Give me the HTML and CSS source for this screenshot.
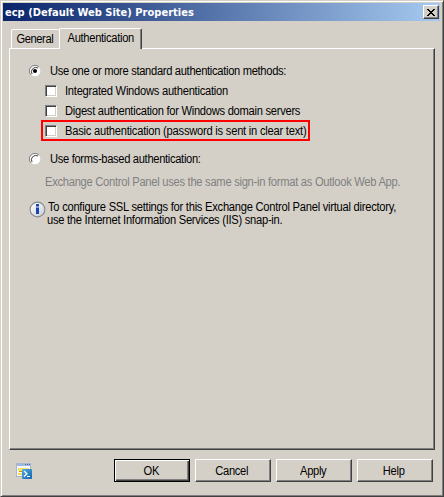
FILE: index.html
```html
<!DOCTYPE html>
<html lang="en">
<head>
<meta charset="utf-8">
<title>ecp (Default Web Site) Properties</title>
<link rel="stylesheet" href="styles.css">
</head>
<body>
<main class="window">
  <header class="titlebar">
    <h1 class="title">ecp (Default Web Site) Properties</h1>
    <button class="close" aria-label="Close">
      <svg width="8" height="7" viewBox="0 0 8 7" shape-rendering="crispEdges"><path d="M0 0h2v1h1v1h2V1h1V0h2v1H7v1H6v1H5v1h1v1h1v1h1v1H6V6H5V5H3v1H2v1H0V6h1V5h1V4h1V3H2V2H1V1H0z"/></svg>
    </button>
  </header>
  <nav class="tabs">
    <div class="tab general"><span class="t-general">General</span></div>
    <div class="tab active"><span class="t-auth">Authentication</span></div>
  </nav>
  <section class="panel">
    <div class="row"><svg class="radio" width="12" height="12" viewBox="0 0 12 12"><circle cx="6" cy="6" r="5.3" fill="#fff"/><path d="M2 10A5.5 5.5 0 0 1 10 2" fill="none" stroke="#808080"/><path d="M3 9A4.4 4.4 0 0 1 9 3" fill="none" stroke="#404040"/><circle cx="6" cy="6" r="2" fill="#000"/></svg><span class="t-use">Use one or more standard authentication methods:</span></div>
    <div class="row sub"><i class="check"></i><span class="t-int">Integrated Windows authentication</span></div>
    <div class="row sub"><i class="check"></i><span class="t-dig">Digest authentication for Windows domain servers</span></div>
    <div class="row sub marked"><i class="check"></i><span class="t-basic">Basic authentication (password is sent in clear text)</span></div>
    <div class="row forms"><svg class="radio" width="12" height="12" viewBox="0 0 12 12"><circle cx="6" cy="6" r="5.3" fill="#fff"/><path d="M2 10A5.5 5.5 0 0 1 10 2" fill="none" stroke="#808080"/><path d="M3 9A4.4 4.4 0 0 1 9 3" fill="none" stroke="#404040"/></svg><span class="t-forms">Use forms-based authentication:</span></div>
    <p class="hint"><span class="t-hint">Exchange Control Panel uses the same sign-in format as Outlook Web App.</span></p>
    <div class="info">
      <svg class="infoicon" width="17" height="17" viewBox="0 0 17 17"><defs><linearGradient id="disc" x2="1" y2="1"><stop stop-color="#fff"/><stop offset="1" stop-color="#c9cdd2"/></linearGradient></defs><circle cx="8.5" cy="8.5" r="7.4" fill="url(#disc)" stroke="#85888d" stroke-width="1.1"/><path d="M7 3h3v2.4H7zM7 6.5h3V13H7z" fill="#1745b5"/></svg>
      <div class="infotext"><p><span class="t-ssl">To configure SSL settings for this Exchange Control Panel virtual directory,</span></p><p class="second"><span class="t-iis">use the Internet Information Services (IIS) snap-in.</span></p></div>
    </div>
  </section>
  <footer class="footer">
    <svg class="shell" width="17" height="17" viewBox="0 0 17 17"><defs><linearGradient id="blue" x2="1" y2="1"><stop stop-color="#55acdf"/><stop offset="1" stop-color="#1264ad"/></linearGradient></defs><rect x=".5" y=".5" width="14" height="13" fill="#f4f7fc" stroke="#a9b6cb"/><path d="M1 1h13v2H1z" fill="#a0b7de"/><path d="M9 1.5h1m1 0h1m1 0h1" stroke="#4868a8"/><path d="M2 5h11v3H2z" fill="#f7e36b"/><path d="M3 8.5h5" stroke="#c89400"/><path d="M2 10h5v2H2z" fill="#f5dc55"/><rect x="6" y="6" width="10" height="10" rx="1" fill="url(#blue)"/><path d="M8 8l3 2.7L8 13.5M11 13.5h3" fill="none" stroke="#fff" stroke-width="1.2"/></svg>
    <button class="btn default"><span class="t-ok">OK</span></button>
    <button class="btn"><span class="t-cancel">Cancel</span></button>
    <button class="btn"><span class="t-apply">Apply</span></button>
    <button class="btn"><span class="t-help">Help</span></button>
  </footer>
</main>
</body>
</html>
```
FILE: styles.css
```css
* { box-sizing: border-box; }
body { margin: 0; background: #d4d0c8; font: 12px/14px "Liberation Sans", Arial, sans-serif; color: #000; }
h1, p { margin: 0; }
span { display: inline-block; white-space: nowrap; transform: scaleX(.93); transform-origin: 0 50%; }
svg { flex: none; display: block; }
button { font: inherit; color: inherit; padding: 0; border-radius: 0; background: #d4d0c8; }

.window {
  width: 444px; height: 497px; padding: 1px 1px 0 1px; overflow: hidden;
  display: flex; flex-direction: column;
  border: 1px solid; border-color: #d4d0c8 #404040 #404040 #d4d0c8;
  box-shadow: inset 1px 1px #fff, inset -1px -1px #808080;
}
.titlebar {
  height: 18px; flex: none; margin: 1px 2px 0 1px; padding: 0 1px 0 2px;
  display: flex; align-items: center; justify-content: space-between;
  background: linear-gradient(90deg, #0a246a, #a6caf0);
}
.title { font: bold 11px/16px "DejaVu Sans Condensed", "Open Sans", sans-serif; color: #fff; letter-spacing: .02px; padding-top: 2px; white-space: nowrap; }
.close {
  width: 16px; height: 14px; display: flex; align-items: center; justify-content: center;
  border: 1px solid; border-color: #fff #404040 #404040 #fff; box-shadow: inset -1px -1px #808080;
}

.tabs { display: flex; align-items: flex-end; height: 27px; flex: none; padding-left: 9px; }
.tab {
  height: 19px; display: flex; justify-content: center; align-items: center;
  border: 1px solid; border-color: #fff #fff transparent #fff; border-radius: 2px 2px 0 0; border-bottom: 0;
}
.tab span, .btn span { transform-origin: 50% 50%; }
.general { width: 48px; border-right: 0; padding-right: 1px; }
.active {
  width: 83px; height: 21px; margin-bottom: -1px; padding-bottom: 2px; position: relative;
  background: #d4d0c8; border-right-color: #404040; box-shadow: inset -1px 0 #808080;
}
.panel {
  height: 402px; flex: none; margin: 0 7px 0 7px; padding: 12px 0 0 19px;
  border: 1px solid; border-color: #fff #404040 #404040 #fff; box-shadow: inset -1px -1px #808080;
}
.row { display: flex; align-items: center; height: 20px; }
.radio { margin-right: 9px; }
.sub { padding-left: 16px; }
.check {
  width: 12px; height: 12px; flex: none; margin-right: 8px; background: #fff;
  border: 1px solid; border-color: #808080 #fff #fff #808080;
  box-shadow: inset 1px 1px #404040, inset -1px -1px #d4d0c8;
}
.marked { width: 269px; height: 21px; margin: -1px 0 0 12px; padding-left: 2px; border: 2px solid #f00; }
.forms { margin-top: 8px; }
.hint { color: #808080; margin: 6px 0 0 16px; height: 14px; }
.info { display: flex; margin-top: 12px; }
.infotext { margin-left: 2px; line-height: 13px; }
.infotext p { height: 13px; }
.infotext .second { margin-left: -1px; }

.footer { display: flex; margin-top: 9px; padding-left: 14px; gap: 5px; }
.shell { margin: 4px 76px 0 0; }
.btn {
  width: 76px; height: 23px; flex: none; border: 1px solid; border-color: #fff #404040 #404040 #fff;
  box-shadow: inset -1px -1px #808080;
}
.btn span { margin-right: 2px; }
.default { border-color: #000; box-shadow: inset 1px 1px #fff, inset -1px -1px #404040, inset -2px -2px #808080; }

.t-use { letter-spacing: -.34px; }
.t-int, .t-ssl { letter-spacing: -.27px; }
.t-dig, .t-hint, .t-iis { letter-spacing: -.29px; }
.t-basic { letter-spacing: -.25px; }
.t-forms { letter-spacing: -.35px; }
.t-general { letter-spacing: -.43px; }
.t-auth, .t-ok, .t-cancel, .t-apply, .t-help { letter-spacing: -.33px; }
```
